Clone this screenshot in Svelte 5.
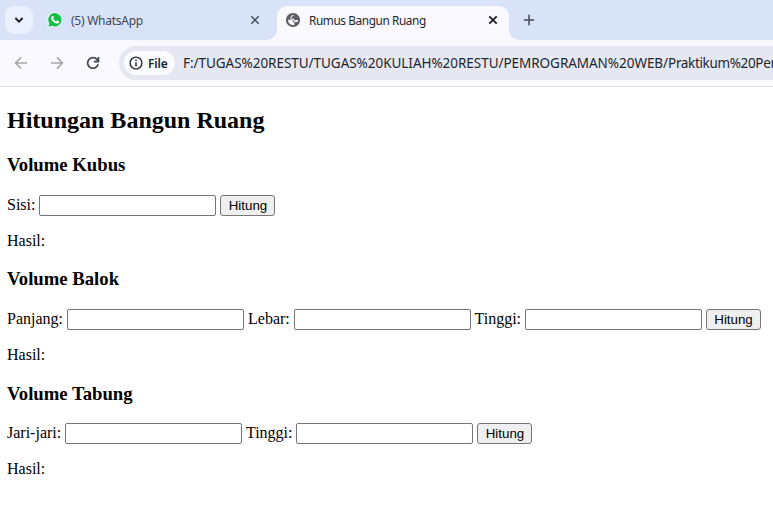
<script>
  const sections = [
    { title: 'Volume Kubus', fields: ['Sisi'] },
    { title: 'Volume Balok', fields: ['Panjang', 'Lebar', 'Tinggi'] },
    { title: 'Volume Tabung', fields: ['Jari-jari', 'Tinggi'] }
  ];
</script>

<div class="window">
  <div class="tabs">
    <div class="search">
      <svg width="10" height="8" viewBox="0 0 10 8"><path d="M1.4 2 5 5.6 8.6 2" fill="none" stroke="#1c1e25" stroke-width="1.9" /></svg>
    </div>
    <div class="tab idle">
      <svg class="wa" width="16" height="16" viewBox="0 0 16 16">
        <path d="M8 .3a7.5 7.5 0 0 0-6.5 11.3L.4 15.7l4.1-1.1A7.5 7.5 0 1 0 8 .3z" fill="#f4fbfb" />
        <path d="M8 1.1a6.7 6.7 0 0 0-5.7 10.3l-.9 3.3 3.4-.9A6.7 6.7 0 1 0 8 1.1z" fill="#12bf45" />
        <path d="M5.3 4.1c.5-.3.9-.2 1.1.3l.5 1.2c.1.4-.4.8-.6 1.1.7 1.3 1.6 2.1 2.9 2.7.4-.4.8-1.1 1.2-.9l1.5.8c.3.3.1 1.2-.4 1.7-1.3 1-3 .4-4.5-.6C5.6 9.4 4.2 7.8 4.1 6.2c0-.9.5-1.7 1.2-2.1z" fill="#fff" />
      </svg>
      <span class="label first">(5) WhatsApp</span>
      <svg class="close" width="10" height="10" viewBox="0 0 10 10"><path d="m1.3 1.3 7.4 7.4m0-7.4L1.3 8.7" stroke="#454c5c" stroke-width="1.5" /></svg>
    </div>
    <div class="tab active">
      <svg class="globe" width="16" height="16" viewBox="0 0 16 16">
        <circle cx="8" cy="8" r="7.1" fill="#5b5e64" />
        <g transform="translate(.8 .8) scale(.9)" fill="#f9f9ff">
          <path d="M9.2 2.5C8.9 3.9 6.3 3.6 6.1 5.4c-.1 1.200 1.100 1.200 2.400 1.200 1.200.1.900 1.600 1.900 1.900 1 .3 1.600-.4 3.200-.4a5.600 5.600 0 0 1-.4 1.900c-1.300.6-3.200.6-4-.4-.7-.9-.2-1.500-1.400-1.700-1.200-.1-2.500-.5-2.700-1.900C4.900 4.100 6.600 2.400 9.200 2.500z" />
          <path d="M2.400 7.700h3.400c1.400.1 2.300.9 2.300 2.200 0 .8.7.9 1.500 1v2.500A5.600 5.600 0 0 1 2.400 7.700z" />
        </g>
      </svg>
      <span class="label second">Rumus Bangun Ruang</span>
      <svg class="close" width="10" height="10" viewBox="0 0 10 10"><path d="m1.3 1.3 7.4 7.4m0-7.4L1.3 8.7" stroke="#202329" stroke-width="1.9" /></svg>
    </div>
    <svg class="plus" width="12" height="12" viewBox="0 0 12 12"><path d="M6 .8v10.4M.8 6h10.4" stroke="#454b58" stroke-width="1.5" /></svg>
  </div>

  <div class="toolbar">
    <svg class="nav" width="14" height="14" viewBox="0 0 14 14"><path d="M13 7H1.7M7 1.4 1.5 7 7 12.6" fill="none" stroke="#a5a7ad" stroke-width="1.5" /></svg>
    <svg class="nav" width="14" height="14" viewBox="0 0 14 14"><path d="M1 7h11.3M7 1.4 12.5 7 7 12.6" fill="none" stroke="#a5a7ad" stroke-width="1.5" /></svg>
    <svg class="reload" width="14" height="14" viewBox="0 0 14 14"><path d="M12.1 8.2A5.3 5.3 0 1 1 10.9 3.4L12.2 5M12.4 1v4.7H7.8" fill="none" stroke="#43474f" stroke-width="1.7" /></svg>
    <div class="address">
      <div class="chip">
        <svg width="14" height="14" viewBox="0 0 14 14"><circle cx="7" cy="7" r="5.9" fill="none" stroke="#24272d" stroke-width="1.4" /><path d="M7 6.2v4M7 3.6v1.5" stroke="#24272d" stroke-width="1.5" /></svg>
        <span>File</span>
      </div>
      <span class="url">F:/TUGAS%20RESTU/TUGAS%20KULIAH%20RESTU/PEMROGRAMAN%20WEB/<span class="leaf">Praktikum%20Pem</span></span>
    </div>
  </div>

  <main>
    <h2>Hitungan Bangun Ruang</h2>
    {#each sections as section}
      <h3>{section.title}</h3>
      <div class="form">
        {#each section.fields as field}
          <label>{field}: <input type="number" /></label>{' '}
        {/each}
        <button type="button">Hitung</button>
      </div>
      <p>Hasil:</p>
    {/each}
  </main>
</div>

<style>
  :global(body) { margin: 0; overflow: hidden; background: #fff; }
  .window { width: 773px; height: 522px; overflow: hidden; background: #fff; }
  svg { display: block; flex: none; }
  .tabs {
    display: flex;
    height: 40px;
    box-sizing: border-box;
    padding: 6px 0 0 5px;
    background: #d8e3f7;
    font: 12px 'Noto Sans', sans-serif;
  }
  .search {
    display: flex;
    align-items: center;
    justify-content: center;
    width: 28px;
    height: 28px;
    border-radius: 9px;
    background: #ebf0ff;
  }
  .tab { display: flex; align-items: center; box-sizing: border-box; position: relative; padding-bottom: 6px; }
  .idle { width: 244px; padding-left: 14px; color: #414757; }
  .active {
    width: 232px;
    padding-left: 8px;
    border-radius: 10px 10px 0 0;
    background: #f9f9ff;
    color: #23262c;
  }
  .active::before, .active::after {
    content: '';
    position: absolute;
    bottom: 0;
    width: 10px;
    height: 10px;
  }
  .active::before { left: -10px; background: radial-gradient(circle at 0 0, transparent 9.5px, #f9f9ff 10px); }
  .active::after { right: -10px; background: radial-gradient(circle at 100% 0, transparent 9.5px, #f9f9ff 10px); }
  .label { margin-left: 8px; white-space: nowrap; }
  .first { letter-spacing: -0.25px; }
  .second { font-size: 11.8px; letter-spacing: -0.4px; }
  .close { margin-left: auto; margin-right: 11px; }
  .idle .close { margin-right: 17px; }
  .plus { margin: 8px 0 0 14px; }
  .toolbar {
    display: flex;
    align-items: center;
    height: 47px;
    box-sizing: border-box;
    padding-left: 14px;
    border-bottom: 1px solid #e1e2e9;
    background: #f9f9ff;
  }
  .nav { margin-right: 22px; }
  .reload { margin-right: 19px; }
  .address {
    display: flex;
    align-items: center;
    flex: 1;
    min-width: 0;
    height: 34px;
    box-sizing: border-box;
    padding-left: 5px;
    border-radius: 17px 0 0 17px;
    background: #e5e8f2;
    overflow: hidden;
  }
  .chip {
    display: flex;
    align-items: center;
    flex: none;
    gap: 5px;
    width: 51px;
    height: 24px;
    box-sizing: border-box;
    padding-left: 5px;
    border-radius: 12px;
    background: #fbfbff;
    color: #202329;
    font: 600 12px 'Noto Sans', sans-serif;
    letter-spacing: -0.2px;
  }
  .url {
    margin-left: 8px;
    white-space: nowrap;
    color: #24272e;
    font: 13.5px/18px 'Noto Sans', sans-serif;
    letter-spacing: -0.04px;
  }
  .leaf { letter-spacing: -0.35px; }
  main {
    padding: 0 7px;
    display: flow-root;
    font: 16px 'Liberation Serif', serif;
    color: #000;
    white-space: nowrap;
  }
  h2 { margin: 19.92px 0; font-size: 24px; }
  h3 { margin: 18.72px 0; font-size: 18.72px; }
  p { margin: 16px 0; }
  input {
    width: 177px;
    height: 21px;
    box-sizing: border-box;
    border: 1px solid #767676;
    border-radius: 2px;
    padding: 1px 2px;
    margin: 0;
    background: #fff;
    font: 13.333px 'Liberation Sans', sans-serif;
  }
  button {
    width: 55px;
    height: 21px;
    box-sizing: border-box;
    border: 1px solid #767676;
    border-radius: 3px;
    padding: 1px 6px;
    margin: 0;
    background: #efefef;
    color: #000;
    font: 13.333px 'Liberation Sans', sans-serif;
  }
</style>
